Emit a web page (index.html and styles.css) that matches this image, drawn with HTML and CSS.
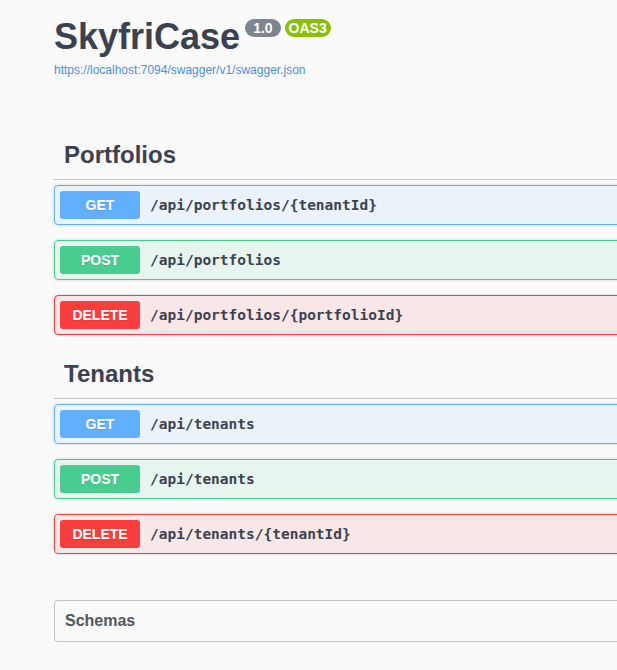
FILE: index.html
```html
<!DOCTYPE html>
<html lang="en">
<head>
<meta charset="utf-8">
<title>SkyfriCase</title>
<link rel="stylesheet" href="styles.css">
</head>
<body>
<div class="wrapper">
  <div class="info">
    <h2 class="title">SkyfriCase<small class="badge version"><pre>1.0</pre></small><small class="badge oas"><pre>OAS3</pre></small></h2>
    <a class="spec-link" href="#">https://localhost:7094/swagger/v1/swagger.json</a>
  </div>

  <div class="tag-section">
    <h3 class="opblock-tag">Portfolios</h3>
    <div class="opblock get">
      <div class="summary"><span class="method">GET</span><span class="path">/api/portfolios/{tenantId}</span></div>
    </div>
    <div class="opblock post">
      <div class="summary"><span class="method">POST</span><span class="path">/api/portfolios</span></div>
    </div>
    <div class="opblock delete">
      <div class="summary"><span class="method">DELETE</span><span class="path">/api/portfolios/{portfolioId}</span></div>
    </div>
  </div>

  <div class="tag-section">
    <h3 class="opblock-tag">Tenants</h3>
    <div class="opblock get">
      <div class="summary"><span class="method">GET</span><span class="path">/api/tenants</span></div>
    </div>
    <div class="opblock post">
      <div class="summary"><span class="method">POST</span><span class="path">/api/tenants</span></div>
    </div>
    <div class="opblock delete">
      <div class="summary"><span class="method">DELETE</span><span class="path">/api/tenants/{tenantId}</span></div>
    </div>
  </div>

  <section class="models">
    <h4>Schemas</h4>
  </section>
</div>
</body>
</html>
```

FILE: styles.css
```css
html, body {
  margin: 0;
  padding: 0;
  background: #fafafa;
  overflow: hidden;
}

body {
  font-family: "Liberation Sans", Arial, sans-serif;
  color: #3b4151;
}

.wrapper {
  width: 1400px;
  padding: 0 0 0 54px;
}

.info {
  padding-top: 16px;
  margin-bottom: 54px;
}

.title {
  margin: 0;
  font-size: 36px;
  line-height: 41px;
  font-weight: 700;
  color: #3b4151;
}

.badge {
  display: inline-block;
  position: relative;
  top: -3px;
  vertical-align: super;
  font-size: 10px;
  border-radius: 57px;
  padding: 2px 4px;
  margin-left: 5px;
  background: #7d8492;
}

.badge.version {
  padding: 2px 8px;
}

.badge.oas {
  background: #89bf04;
  margin-left: 4px;
}

.badge pre {
  margin: 0;
  padding: 0;
  font-family: "Liberation Sans", Arial, sans-serif;
  font-size: 14px;
  font-weight: 700;
  line-height: 14px;
  color: #fff;
}

.spec-link {
  display: block;
  margin-top: 6px;
  font-size: 12px;
  line-height: 14px;
  color: #4990e2;
  text-decoration: none;
}

.tag-section {
  display: flex;
  flex-direction: column;
}

.opblock-tag {
  margin: 0 0 5px;
  padding: 10px 20px 10px 10px;
  font-size: 24px;
  font-weight: 700;
  line-height: 28px;
  border-bottom: 1px solid rgba(59, 65, 81, 0.3);
  color: #3b4151;
}

.opblock {
  margin: 0 0 15px;
  border: 1px solid #000;
  border-radius: 4px;
  box-shadow: 0 0 3px rgba(0, 0, 0, 0.19);
}

.summary {
  display: flex;
  align-items: center;
  padding: 5px;
}

.method {
  min-width: 80px;
  padding: 6px 0;
  text-align: center;
  border-radius: 3px;
  font-size: 14px;
  line-height: 16px;
  font-weight: 700;
  color: #fff;
  text-shadow: 0 1px 0 rgba(0, 0, 0, 0.1);
}

.path {
  padding: 0 10px;
  font-family: "DejaVu Sans Mono", "Liberation Mono", monospace;
  font-size: 14.5px;
  font-weight: 700;
  color: #3b4151;
}

.opblock.get {
  background: rgba(97, 175, 254, 0.1);
  border-color: #61affe;
}
.opblock.get .method { background: #61affe; }

.opblock.post {
  background: rgba(73, 204, 144, 0.1);
  border-color: #49cc90;
}
.opblock.post .method { background: #49cc90; }

.opblock.delete {
  background: rgba(249, 62, 62, 0.1);
  border-color: #f93e3e;
}
.opblock.delete .method { background: #f93e3e; }

.models {
  margin: 31px 0 30px;
  border: 1px solid rgba(59, 65, 81, 0.3);
  border-radius: 4px;
}

.models h4 {
  margin: 0;
  padding: 10px 20px 10px 10px;
  font-size: 16px;
  line-height: 20px;
  font-weight: 700;
  color: #505762;
}
```
